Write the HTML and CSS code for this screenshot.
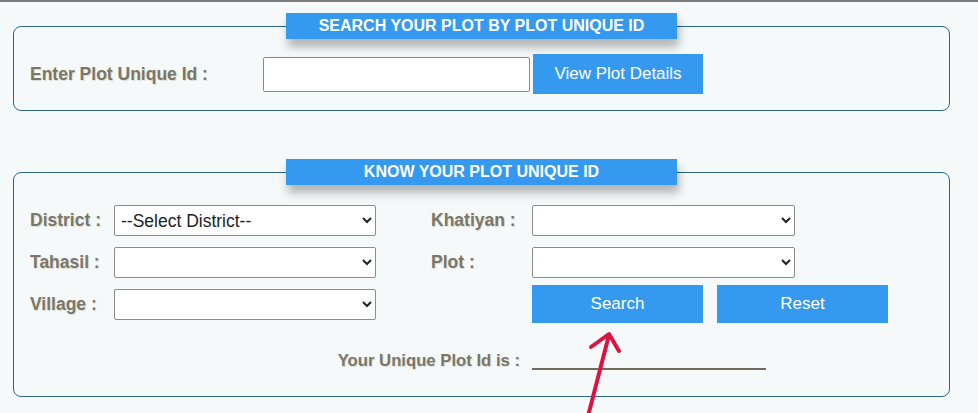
FILE: index.html
```html
<!DOCTYPE html>
<html lang="en">
<head>
<meta charset="utf-8">
<title>Plot Unique Id</title>
<link rel="stylesheet" href="styles.css">
</head>
<body>
<div class="topline"></div>
<div class="page">
  <fieldset class="box box-id">
    <legend class="box-title">SEARCH YOUR PLOT BY PLOT UNIQUE ID</legend>
    <div class="id-row">
      <label class="lbl id-lbl">Enter Plot Unique Id :</label>
      <input class="txt" type="text">
      <button class="btn btn-view" type="button">View Plot Details</button>
    </div>
  </fieldset>

  <fieldset class="box box-know">
    <legend class="box-title">KNOW YOUR PLOT UNIQUE ID</legend>
    <div class="know-grid">
      <label class="lbl c1 r1">District :</label>
      <select class="sel c2 r1"><option>--Select District--</option></select>
      <label class="lbl c4 r1">Khatiyan :</label>
      <select class="sel c5 r1"><option></option></select>

      <label class="lbl c1 r2">Tahasil :</label>
      <select class="sel c2 r2"><option></option></select>
      <label class="lbl c4 r2">Plot :</label>
      <select class="sel c5 r2"><option></option></select>

      <label class="lbl c1 r3">Village :</label>
      <select class="sel c2 r3"><option></option></select>
      <div class="actions c5 r3">
        <button class="btn btn-act" type="button">Search</button>
        <button class="btn btn-act" type="button">Reset</button>
      </div>

      <div class="lbl result-lbl r4">Your Unique Plot Id is :</div>
      <div class="result-line c5 r4"></div>
    </div>
  </fieldset>
</div>
<svg class="annot" width="978" height="413" viewBox="0 0 978 413" aria-hidden="true">
  <path d="M587 420 L609 335" stroke="#dc1340" stroke-width="4" fill="none" stroke-linecap="round"/>
  <path d="M591 347 L609 334 L619 351" stroke="#dc1340" stroke-width="4" fill="none" stroke-linecap="round" stroke-linejoin="round"/>
</svg>
</body>
</html>
```
FILE: styles.css
```css
html, body {
  margin: 0;
  padding: 0;
}
body {
  background: #f5f9f9;
  font-family: "Liberation Sans", Arial, sans-serif;
  width: 978px;
  height: 413px;
  overflow: hidden;
  position: relative;
}
.topline {
  height: 2px;
  background: #7a7a7a;
}
.page {
  padding: 11px 0 0 13px;
}
.box {
  width: 937px;
  box-sizing: border-box;
  margin: 0;
  border: 1px solid #2f6489;
  border-radius: 8px;
  padding: 15px 16px 16px 16px;
}
.box-know {
  margin-top: 48px;
  padding: 20px 16px 25px 16px;
}
.box-title {
  width: 391px;
  box-sizing: border-box;
  height: 26px;
  line-height: 26px;
  margin: 0 auto;
  padding: 0;
  text-align: center;
  background: #3599f0;
  color: #fff;
  font-weight: bold;
  font-size: 16px;
  box-shadow: 2px 8px 10px rgba(0, 0, 0, 0.28);
}
.lbl {
  font-weight: bold;
  font-size: 17.5px;
  color: #7b7767;
  text-shadow: 1px 1px 1px rgba(0, 0, 0, 0.12);
}
.id-row {
  display: flex;
  align-items: center;
  height: 40px;
}
.id-lbl {
  width: 233px;
}
.txt {
  width: 267px;
  height: 35px;
  box-sizing: border-box;
  border: 1px solid #8a8a8a;
  border-radius: 2px;
  background: #fff;
  margin: 0;
  font-size: 17px;
}
.btn {
  border: none;
  margin: 0;
  padding: 0;
  background: #3599f0;
  color: #fff;
  font-family: "Liberation Sans", Arial, sans-serif;
  font-size: 17px;
}
.btn-view {
  margin-left: 3px;
  width: 170px;
  height: 40px;
}
.know-grid {
  display: grid;
  grid-template-columns: 84px 262px 55px 101px 263px;
  grid-template-rows: 31px 31px 31px auto;
  row-gap: 11px;
  align-items: center;
}
.c1 { grid-column: 1; }
.c2 { grid-column: 2; }
.c4 { grid-column: 4; }
.c5 { grid-column: 5; }
.r1 { grid-row: 1; }
.r2 { grid-row: 2; }
.r3 { grid-row: 3; }
.r4 { grid-row: 4; }
.sel {
  width: 100%;
  height: 31px;
  box-sizing: border-box;
  border: 1px solid #8c8c8c;
  border-radius: 2px;
  background-color: #fff;
  color: #222;
  font-family: "Liberation Sans", Arial, sans-serif;
  font-size: 17.5px;
  margin: 0;
  padding: 0 2px;
}
.actions {
  display: flex;
  gap: 14px;
  width: 356px;
  margin: -4px 0 -3px 0;
}
.btn-act {
  width: 171px;
  height: 38px;
}
.result-lbl {
  grid-column: 1 / 5;
  text-align: right;
  padding-right: 12px;
  font-size: 16.7px;
  line-height: 20px;
  margin-top: 20px;
  align-self: start;
}
.result-line {
  width: 234px;
  height: 19px;
  border-bottom: 2px solid #6f6e5e;
  margin-top: 18px;
  align-self: start;
}
.annot {
  position: absolute;
  left: 0;
  top: 0;
  pointer-events: none;
}
```
